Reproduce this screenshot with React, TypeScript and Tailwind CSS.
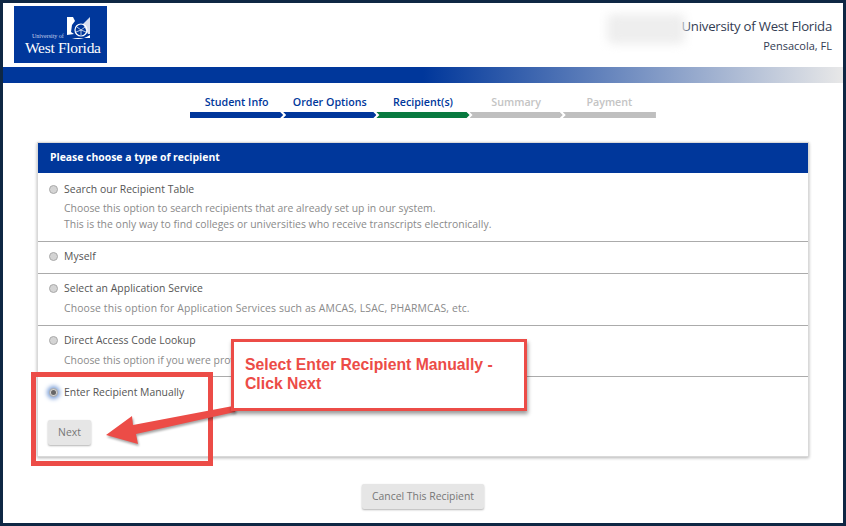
const steps = [
  { label: "Student Info", text: "text-[#00379b]", bar: "bg-[#00379b]" },
  { label: "Order Options", text: "text-[#00379b]", bar: "bg-[#00379b]" },
  { label: "Recipient(s)", text: "text-[#00379b]", bar: "bg-[#087a3f]" },
  { label: "Summary", text: "text-[#c4c4c4]", bar: "bg-[#bfbfbf]" },
  { label: "Payment", text: "text-[#c4c4c4]", bar: "bg-[#bfbfbf]" },
];

function Radio({ checked = false }: { checked?: boolean }) {
  return (
    <span
      className={`-mt-[1px] flex h-[9px] w-[9px] shrink-0 items-center justify-center rounded-full border border-[#a9a9a9] bg-[#d4d4d4] ${
        checked ? "shadow-[0_0_4px_2px_#7b9fd8]" : ""
      }`}
    >
      {checked && <span className="h-[5px] w-[5px] rounded-full bg-[#666]" />}
    </span>
  );
}

function Option({
  title,
  lines = [],
  className,
  descClass = "mt-[3px]",
}: {
  title: string;
  lines?: { text: string; cls?: string }[];
  className: string;
  descClass?: string;
}) {
  return (
    <div className={`border-b border-[#ababab] pl-[11px] ${className}`}>
      <div className="flex h-[16px] items-center gap-[6px] text-[#555]">
        <Radio />
        <span className="tracking-[0.05px]">{title}</span>
      </div>
      {lines.length > 0 && (
        <div className={`${descClass} pl-[15px] leading-[16px] text-[#8a8a8a]`}>
          {lines.map((l) => (
            <div key={l.text} className={l.cls}>
              {l.text}
            </div>
          ))}
        </div>
      )}
    </div>
  );
}

function Logo() {
  return (
    <div className="relative ml-[11px] mt-[3px] h-[57px] w-[93px] bg-[#00379b] text-white">
      <svg className="absolute left-[52px] top-[10px]" width="26" height="26" viewBox="0 0 26 26">
        <path d="M1 1h6l2 4-3 4-1 7 3 2-7 1z" fill="#fff" />
        <path d="M17 8l7-7v17h-2z" fill="#d8dff0" />
        <circle cx="15" cy="14" r="6" fill="none" stroke="#fff" strokeWidth="1.2" />
        <path d="M15 14l-4-3M15 14l4-3M15 14l0 5M15 14l-5 2M15 14l5 2" stroke="#fff" strokeWidth="0.7" />
        <path d="M6 22c6 2 12 1 18-3v3H6z" fill="#fff" />
      </svg>
      <div className="absolute left-[18px] top-[27px] font-['Liberation_Serif',serif] text-[6px] leading-[7px] text-[#c9d3ec]">
        University of
      </div>
      <div className="absolute left-[11px] top-[33px] whitespace-nowrap font-['Liberation_Serif',serif] text-[15.5px] leading-[18px] tracking-[-0.3px]">
        West Florida
      </div>
    </div>
  );
}

export default function App() {
  return (
    <div className="relative h-[526px] w-[846px] overflow-hidden border-[3px] border-[#0e2744] bg-white font-['Open_Sans',sans-serif] text-[10.4px]">
      <header className="flex h-[64px] justify-between">
        <Logo />
        <div className="relative flex flex-col items-end pr-[11px] pt-[12px]">
          <div className="absolute right-[158px] top-[11px] h-[30px] w-[78px] rounded-[6px] bg-[#eeeeee] blur-[5px]" />
          <div className="text-[13.2px] leading-[22px] tracking-[-0.24px] text-[#333c52]">University of West Florida</div>
          <div className="mt-[1px] text-[11px] leading-[16px] text-[#333c52]">Pensacola, FL</div>
        </div>
      </header>

      <div className="h-[16px] bg-[linear-gradient(to_right,#00379b_0%,#00379b_50%,#e8e8e8_100%)]" />

      <nav className="ml-[187px] mt-[11px] flex w-[466px]">
        {steps.map((s, i) => (
          <div key={s.label} className="flex w-[93.2px] flex-col items-center">
            <div className={`h-[18px] text-[10.7px] font-semibold leading-[16px] ${s.text}`}>{s.label}</div>
            <div
              className={`h-[6px] w-full ${s.bar} ${
                i === 0
                  ? "[clip-path:polygon(0_0,calc(100%-3px)_0,100%_50%,calc(100%-3px)_100%,0_100%)]"
                  : i === 4
                    ? "[clip-path:polygon(0_0,100%_0,100%_100%,0_100%,3px_50%)]"
                    : "[clip-path:polygon(0_0,calc(100%-3px)_0,100%_50%,calc(100%-3px)_100%,0_100%,3px_50%)]"
              }`}
            />
          </div>
        ))}
      </nav>

      <section className="ml-[34px] mt-[24px] h-[315px] w-[772px] border border-[#d9d9d9] shadow-[0_1px_3px_rgba(0,0,0,0.3)]">
        <h1 className="flex h-[30px] items-center bg-[#00379b] pl-[12px] text-[10.4px] font-bold text-white">
          Please choose a type of recipient
        </h1>
        <Option
          className="h-[69px] pt-[9px]"
          descClass="mt-[2px]"
          title="Search our Recipient Table"
          lines={[
            { text: "Choose this option to search recipients that are already set up in our system." },
            {
              text: "This is the only way to find colleges or universities who receive transcripts electronically.",
              cls: "tracking-[0.03px]",
            },
          ]}
        />
        <Option className="h-[32px] pt-[7px]" title="Myself" />
        <Option
          className="h-[52px] pt-[7px]"
          title="Select an Application Service"
          lines={[
            {
              text: "Choose this option for Application Services such as AMCAS, LSAC, PHARMCAS, etc.",
              cls: "tracking-[0.13px]",
            },
          ]}
        />
        <Option
          className="h-[51px] pt-[7px]"
          title="Direct Access Code Lookup"
          lines={[{ text: "Choose this option if you were provided a Direct Access Code." }]}
        />
        <div className="pl-[11px] pt-[8px]">
          <div className="flex h-[16px] items-center gap-[6px] text-[#555]">
            <Radio checked />
            <span>Enter Recipient Manually</span>
          </div>
          <button className="-ml-[1px] mt-[19px] block h-[25px] w-[43px] rounded-[2px] bg-[#e6e6e6] text-[#777] shadow-[0_1px_2px_rgba(0,0,0,0.3)]">
            Next
          </button>
        </div>
      </section>

      <div className="mt-[27px] flex justify-center">
        <button className="h-[25px] w-[122px] rounded-[2px] bg-[#e6e6e6] text-[#777] shadow-[0_1px_2px_rgba(0,0,0,0.3)]">
          Cancel This Recipient
        </button>
      </div>

      {/* annotations */}
      <div className="absolute left-[28px] top-[369px] h-[94px] w-[182px] border-[5px] border-[#ec4c47]" />
      <svg className="absolute left-[94px] top-[392px] drop-shadow-[1px_2px_1px_rgba(0,0,0,0.35)]" width="145" height="55" viewBox="97 395 145 55">
        <path d="M106 435L132 416L133 425L233 406Q237 408 235 412L136 434L138 444Z" fill="#ec4c47" />
      </svg>
      <div className="absolute left-[228px] top-[336px] h-[72px] w-[296px] border-[3px] border-[#ec4c47] bg-white pl-[11px] pt-[13px] font-['Liberation_Sans',sans-serif] text-[15.75px] font-bold leading-[19px] text-[#ec4c47] shadow-[1px_3px_4px_rgba(0,0,0,0.4)]">
        Select Enter Recipient Manually -<br />Click Next
      </div>
    </div>
  );
}
